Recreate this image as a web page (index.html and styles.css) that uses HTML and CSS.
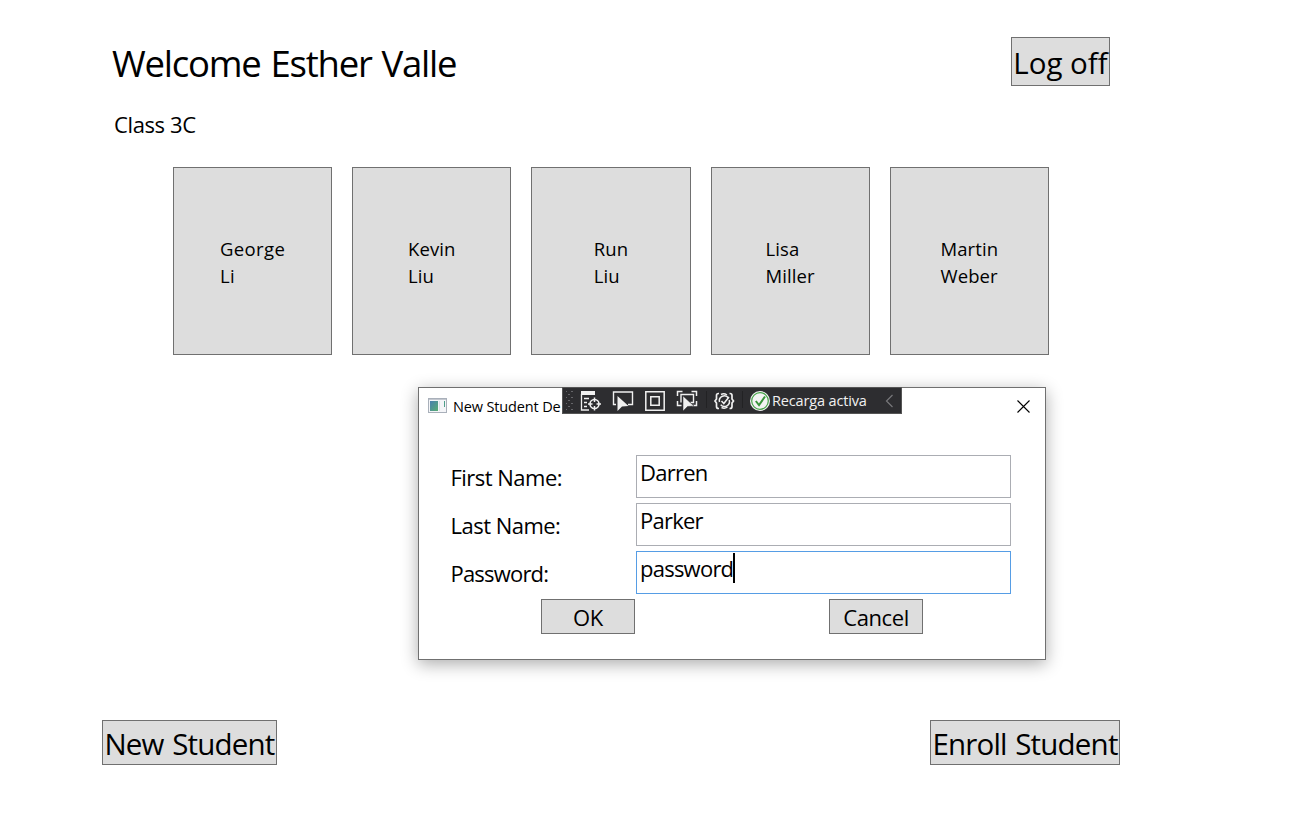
FILE: index.html
```html
<!DOCTYPE html>
<html lang="en">
<head>
<meta charset="utf-8">
<title>Class 3C</title>
<link rel="stylesheet" href="styles.css">
</head>
<body>
<main class="page">
  <header class="header">
    <h1 class="welcome">Welcome Esther Valle</h1>
    <button class="button button-logoff"><span>Log off</span></button>
  </header>
  <h2 class="class-name">Class 3C</h2>
  <section class="students">
    <button class="card george"><span>George<br>Li</span></button>
    <button class="card"><span>Kevin<br>Liu</span></button>
    <button class="card"><span>Run<br>Liu</span></button>
    <button class="card"><span>Lisa<br>Miller</span></button>
    <button class="card"><span>Martin<br>Weber</span></button>
  </section>
  <footer class="footer">
    <button class="button button-new"><span>New Student</span></button>
    <button class="button button-enroll"><span>Enroll Student</span></button>
  </footer>
</main>

<section class="dialog">
  <div class="titlebar">
    <svg class="app-icon" width="19" height="16" viewBox="0 0 19 16">
      <defs><linearGradient id="g" x1="0" y1="0" x2="1" y2="1"><stop offset="0" stop-color="#4a7fb0"/><stop offset="1" stop-color="#58ad72"/></linearGradient></defs>
      <rect x=".5" y=".5" width="18" height="14" fill="#f4f5f8" stroke="#a9b0ba"/>
      <path d="M1 1.500h17" stroke="#c3c7cf"/>
      <rect x="2" y="3" width="8" height="10" fill="url(#g)"/>
      <path d="M11.500 3v10" stroke="#dfe2e8"/>
      <path d="M16.500 3v6" stroke="#4f9f8a"/>
    </svg>
    <span class="dialog-title">New Student De</span>
    <svg class="close" width="13" height="13" viewBox="0 0 13 13"><path d="M.5.5l12 12M12.5.5l-12 12" stroke="#000" stroke-width="1.1"/></svg>
  </div>
  <form class="form">
    <label class="row"><span class="label">First Name:</span><span class="input"><span>Darren</span></span></label>
    <label class="row"><span class="label">Last Name:</span><span class="input"><span>Parker</span></span></label>
    <label class="row"><span class="label label-password">Password:</span><span class="input focused"><span>password</span><i class="caret"></i></span></label>
    <div class="actions">
      <button type="button" class="button button-small"><span>OK</span></button>
      <button type="button" class="button button-small"><span>Cancel</span></button>
    </div>
  </form>
  <div class="toolbar">
    <svg width="340" height="27" viewBox="0 0 340 27" fill="none">
      <defs><pattern id="dots" width="6" height="6" patternUnits="userSpaceOnUse"><path d="M0 1h2v1H0zM3 4h2v1H3z" fill="#66666a"/></pattern></defs>
      <rect x="4" y="3" width="7" height="21" fill="url(#dots)"/>
      <g stroke="#f0f0f0">
        <path d="M19 4h14v4H19z" fill="#f0f0f0" stroke="none"/>
        <path d="M19.500 7v16H27M22 11.500h5M22 15.500h3M22 19.500h3" stroke-width="1.300"/>
        <circle cx="32.500" cy="17" r="4.500" stroke-width="1.600"/>
        <path d="M32.500 10.500v4.500M32.500 19v4.500M26 17h4.500M34.500 17H39" stroke-width="1.500"/>
        <path d="M54 17.500h-2.500V5h19v12.500H66" stroke-width="1.400"/>
        <path d="M55.500 9v15l4.500-4.500 6.500-.5z" fill="#f0f0f0" stroke="none"/>
        <path d="M83.800 4.800h18.400v18.400H83.800zM88.800 9.800h8.400v8.400h-8.400z" stroke-width="1.500"/>
        <path d="M115.500 9V4.500h5M129.500 4.500h5V9M134.500 14v4.500H130M115.500 14v4.500h4" stroke-width="1.500"/>
        <path d="M119 15.500V7.500h12.500v8h-3" stroke-width="1.400"/>
        <path d="M121 9v15l4.500-4.500 6.500-.5z" fill="#f0f0f0" stroke="#2d2d30" stroke-width=".5"/>
        <path d="M157 6.500h-.5q-2 0-2 2v3.500l-1.500 2 1.500 2v3.500q0 2 2 2h.5M167.500 6.500h.5q2 0 2 2v3.500l1.500 2-1.500 2v3.500q0 2-2 2h-.5" stroke-width="1.700"/>
        <path d="M157.500 15a5 5 0 0 1 9-4M167.200 13a5 5 0 0 1-8.500 4.800" stroke-width="1.500"/>
        <path d="M159.500 14l2.300 2.500 5.200-6.500M159 7.500q3-1.500 6 .5M159.500 20.500q3 1.500 6-.5" stroke-width="1.500"/>
      </g>
      <path d="M144.500 4v17M180.500 4v17" stroke="#222224"/>
      <circle cx="198" cy="14" r="10" fill="#f3f3f3"/>
      <circle cx="198" cy="14" r="8.300" stroke="#45a247" stroke-width="1.200"/>
      <path d="M193.800 14l3.200 4 6-8.500" stroke="#38943a" stroke-width="2"/>
      <path d="M330.500 8l-6 6 6 6" stroke="#77777a" stroke-width="1.200"/>
    </svg>
    <span class="toolbar-label">Recarga activa</span>
  </div>
</section>
</body>
</html>
```
FILE: styles.css
```css
* { box-sizing: border-box; }
body {
  margin: 0;
  background: #fff;
  color: #000;
  font-family: "Open Sans", "Noto Sans", sans-serif;
  overflow: hidden;
}
.page {
  width: 1295px;
  height: 817px;
  padding: 37px 175px 52px 102px;
  display: flex;
  flex-direction: column;
}
.header {
  display: flex;
  justify-content: space-between;
  padding: 0 10px;
}
h1, h2 { margin: 0; font-weight: 400; white-space: nowrap; }
.welcome { font-size: 36.5px; line-height: 53px; letter-spacing: -1.22px; word-spacing: 1.6px; }
.class-name { font-size: 22px; line-height: 30px; margin: 19px 0 0 12px; letter-spacing: -0.38px; }
.button, .card {
  font: inherit;
  color: #000;
  background: #ddd;
  border: 1px solid #707070;
  border-radius: 0;
  padding: 0;
  display: flex;
  white-space: nowrap;
}
.button { align-items: center; justify-content: center; }
.button-logoff { width: 99px; height: 49px; font-size: 29.5px; letter-spacing: 0; padding-top: 2px; }
.header .button { margin-bottom: -3px; }
.students {
  display: flex;
  gap: 20px;
  margin: 28px 0 0 71px;
}
.card {
  width: 159.2px;
  height: 188px;
  align-items: center;
  justify-content: center;
  font-size: 18.5px;
  line-height: 27px;
  text-align: left;
  letter-spacing: 0.1px;
  padding-top: 1px;
}
.george { letter-spacing: 0.4px; }
.footer {
  margin-top: auto;
  display: flex;
  justify-content: space-between;
}
.button-new, .button-enroll { height: 45px; font-size: 29.5px; letter-spacing: -0.8px; word-spacing: 1.6px; padding-top: 1px; }
.button-new { width: 175px; }
.button-enroll { width: 190px; }

.dialog {
  position: absolute;
  left: 418px;
  top: 387px;
  width: 628px;
  height: 273px;
  background: #fff;
  border: 1px solid #707070;
  box-shadow: 0 4px 16px rgba(0, 0, 0, .33);
}
.titlebar {
  height: 37px;
  display: flex;
  align-items: center;
  padding: 0 15px 1px 9px;
}
.dialog-title { font-size: 14.5px; line-height: 20px; letter-spacing: -0.14px; margin: 2px 0 0 6px; white-space: nowrap; }
.close { margin-left: auto; }
.form {
  padding: 30px 34px 0 32px;
  display: flex;
  flex-direction: column;
  gap: 5px;
  font-size: 22px;
  letter-spacing: -0.76px;
}
.row { display: flex; height: 43px; }
.label { width: 185.500px; margin-left: -.5px; line-height: 30px; padding-top: 7px; letter-spacing: -0.52px; }
.label-password { letter-spacing: -0.8px; }
.input {
  width: 375px;
  height: 43px;
  border: 1px solid #abadb3;
  padding: 1px 0 0 3px;
  line-height: 30px;
  display: flex;
}
.focused { border-color: #569de5; }
.caret { width: 2px; height: 30px; background: #000; }
.actions { display: flex; gap: 194px; padding-left: 90px; }
.button-small { width: 94px; height: 35px; letter-spacing: -0.4px; padding-top: 1px; }
.toolbar {
  position: absolute;
  left: 143px;
  top: -1px;
  width: 340px;
  height: 27px;
  background: #2d2d30;
  border: 1px solid #555;
  color: #f1f1f1;
}
.toolbar svg { display: block; margin: -1px; }
.toolbar-label {
  position: absolute;
  left: 209px;
  top: 3px;
  font-size: 14.5px;
  line-height: 20px;
  letter-spacing: -0.15px;
  white-space: nowrap;
}
```
